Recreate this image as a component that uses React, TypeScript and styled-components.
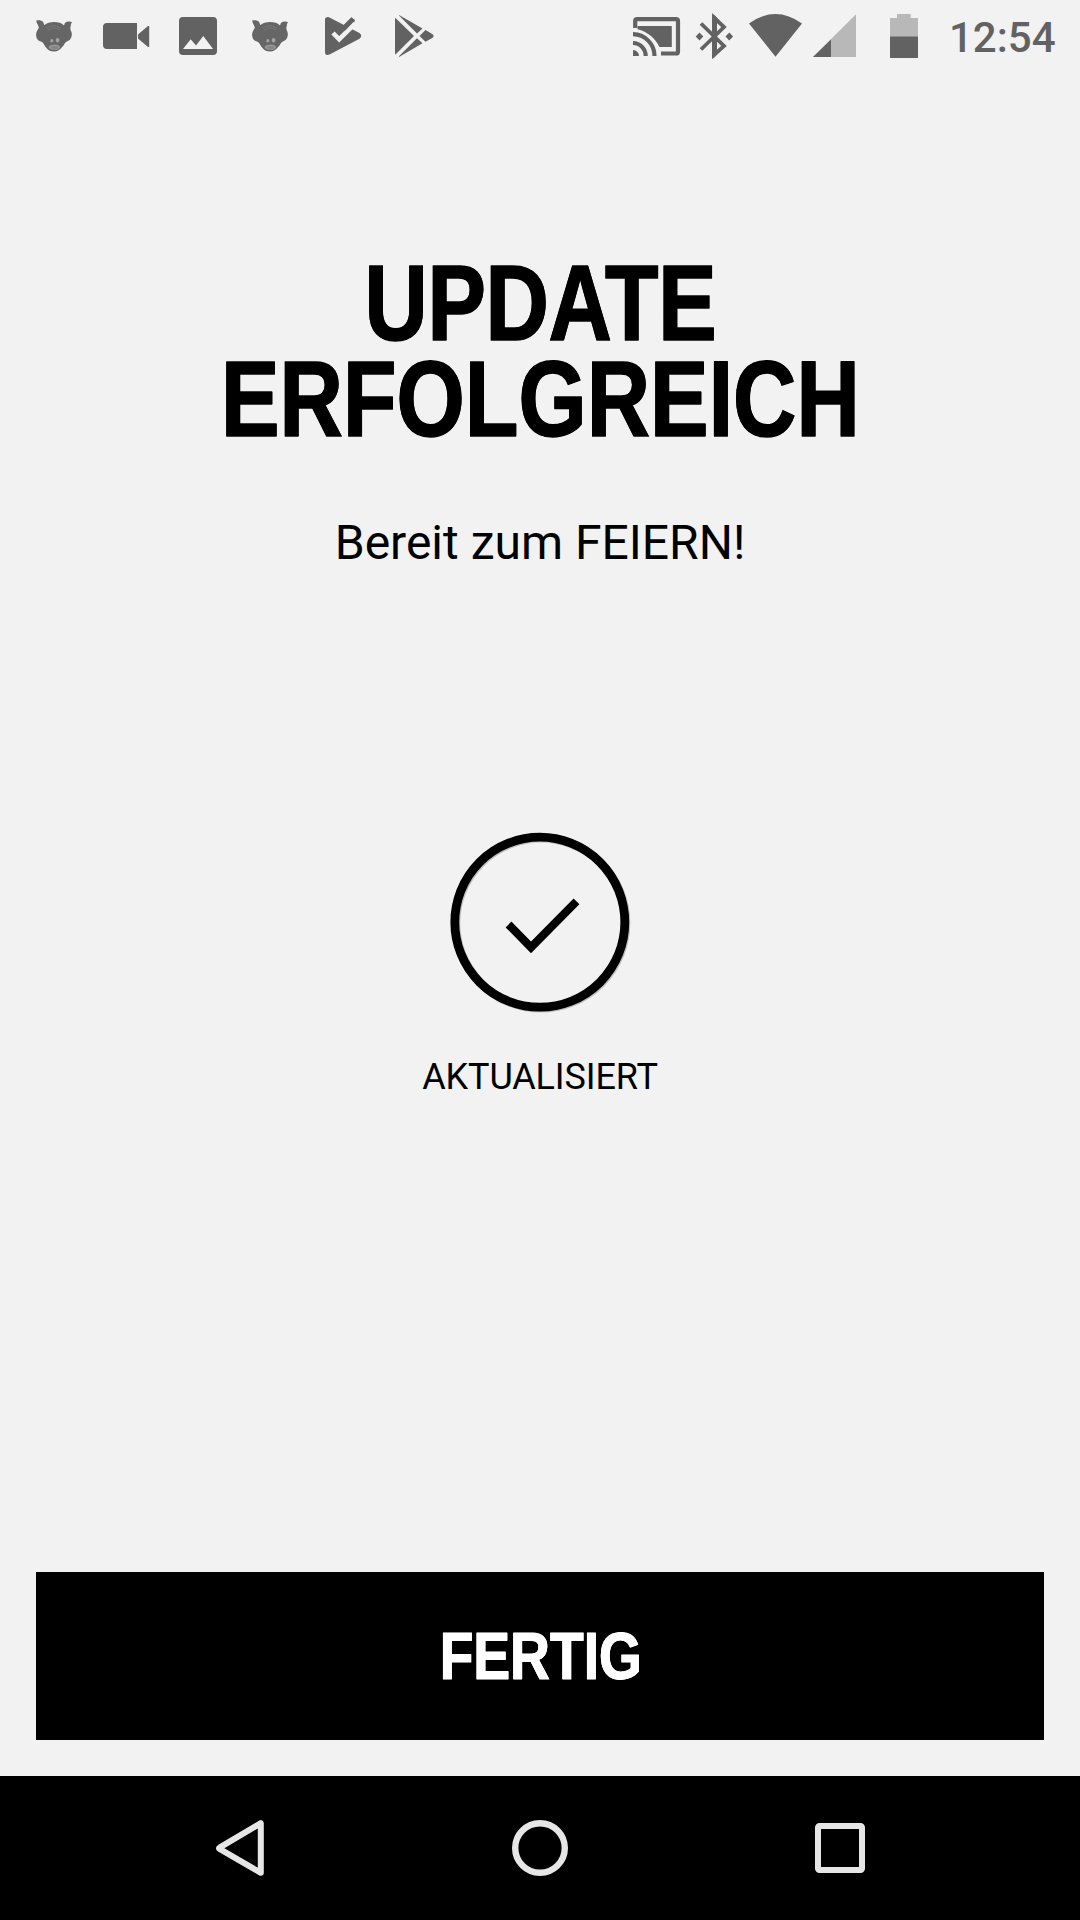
import React from 'react';
import styled, { createGlobalStyle } from 'styled-components';

const BG = '#f2f2f2';
const GREY = '#626262';
const LIGHT = '#b8b8b8';

const GlobalStyle = createGlobalStyle`
  * { box-sizing: border-box; }
  body { margin: 0; background: ${BG}; }
`;

const Screen = styled.main`
  width: 1080px;
  height: 1920px;
  display: flex;
  flex-direction: column;
  background: ${BG};
  color: #000;
  font-family: Roboto, 'Liberation Sans', sans-serif;
  overflow: hidden;
`;

const StatusBar = styled.header`
  display: flex;
  justify-content: space-between;
  height: 72px;
  padding: 0 24px 0 18px;
  color: ${GREY};
`;

const IconGroup = styled.div`
  display: flex;
  align-items: center;
`;

const Icon = styled.svg`
  display: block;
  flex: none;
`;

const Clock = styled.time`
  width: 114px;
  padding: 3px 0 0 7px;
  font-size: 42px;
  font-weight: 500;
  line-height: 72px;
  white-space: nowrap;
`;

const Content = styled.section`
  flex: 1;
  display: flex;
  flex-direction: column;
  align-items: center;
  padding-top: 183px;
`;

const Title = styled.h1`
  display: flex;
  flex-direction: column;
  margin: 0;
  font-family: 'Liberation Sans', Arial, sans-serif;
  font-size: 107px;
  font-weight: 700;
  line-height: 96px;
  text-align: center;
  white-space: nowrap;
  transform: scaleX(0.818);
  -webkit-text-stroke: 1.5px #000;
  text-shadow: 0.7px 0 #000, -0.7px 0 #000;
`;

const TitleLine = styled.span<{ $tracking?: number }>`
  display: block;
  height: 96px;
  letter-spacing: ${({ $tracking = 0 }) => $tracking}px;
`;

const Subtitle = styled.p`
  margin: 68px 0 0;
  font-size: 48px;
  line-height: 56px;
`;

const Badge = styled.div`
  display: flex;
  margin-top: 259px;
`;

const Caption = styled.p`
  margin: 42px 0 0;
  font-size: 36px;
  line-height: 42px;
  letter-spacing: -0.12px;
`;

const Footer = styled.footer`
  padding: 0 36px 36px;
`;

const DoneButton = styled.button`
  display: flex;
  align-items: center;
  justify-content: center;
  width: 100%;
  height: 168px;
  padding: 0 0 0 1px;
  border: 0;
  background: #000;
  color: #fff;
  font-family: 'Liberation Sans', Arial, sans-serif;
  font-size: 67.5px;
  font-weight: 700;
  line-height: 80px;
`;

const ButtonLabel = styled.span`
  transform: scaleX(0.817);
  -webkit-text-stroke: 1px #fff;
  text-shadow: 0.5px 0 #fff, -0.5px 0 #fff;
`;

const NavBar = styled.nav`
  display: flex;
  align-items: center;
  justify-content: space-between;
  height: 144px;
  padding: 0 204px;
  background: #000;
  color: #e6e6e6;
`;

function PigIcon() {
  return (
    <Icon width="72" height="72" viewBox="0 0 72 72">
      <path
        d="M18.3 20.5C20 19.8 24 20.3 25.3 22.2C26 23.4 25.6 24.6 26.6 25C30 21.2 42 20.6 45.6 25.2C46.8 25 46 23.4 47.6 22.4C49 21.4 52 20.8 54 22.3C52.5 24 53.2 25.6 52.3 27.8C52 29.3 53.4 30.8 53.8 33.5C54.1 37.4 52 40.8 48.8 41.4C46.6 42.4 46.4 44.6 44.6 46.6C42 50.2 39.6 51.5 36 51.6C32.5 51.6 29.8 50 27.6 47C25.9 44.8 25.4 42.5 23.2 41.5C19.9 41 17.9 38 18.1 34.4C18.2 31.5 19.8 29.6 20.8 28C20.8 25.3 18.2 23.3 18.3 20.5Z"
        fill="#666"
      />
      <path d="M28.7 27.8Q35.6 23.5 43 28M29.7 30Q36 26 42 30" fill="none" stroke="#7c7c7c" strokeWidth=".8" />
      <ellipse cx="33.8" cy="40.7" rx="1.5" ry="1.8" fill="#a4a4a4" />
      <ellipse cx="39.6" cy="40.3" rx="1.8" ry="2.3" fill="#a4a4a4" />
      <ellipse cx="36.4" cy="47.3" rx="5.6" ry="2.8" fill="#969696" />
      <ellipse cx="36.4" cy="47.6" rx="3.6" ry="1.4" fill="#858585" />
    </Icon>
  );
}

function VideoIcon() {
  return (
    <Icon width="72" height="72" viewBox="0 0 72 72" fill={GREY}>
      <path d="M17 23H47V49H17Q13 49 13 45V27Q13 23 17 23ZM48 34.5L58 26H59.2V47H58L48 38.5Z" />
    </Icon>
  );
}

function ImageIcon() {
  return (
    <Icon width="72" height="72" viewBox="0 0 72 72">
      <rect x="17" y="17" width="38" height="38" rx="4" fill={GREY} />
      <path d="M21 49L28.7 39.2L34 45.4L41.3 36L51 49Z" fill={BG} />
    </Icon>
  );
}

function PlayCheckIcon() {
  return (
    <Icon width="72" height="72" viewBox="0 0 72 72">
      <path d="M19 19.5Q19 17 22 17Q23 17 24 17.7L38 25L45.5 17.5L48.9 20.2L45.7 29L53.5 33Q57 36 53.5 38.7L24 54.3Q19 56.3 19 52Z" fill={GREY} />
      <path d="M27 33L33.2 39.3L49 23.5" fill="none" stroke={BG} strokeWidth="4.6" />
      <path d="M37.7 25L45.4 17.3L49 20.2L38.5 31.2Z" fill={GREY} />
    </Icon>
  );
}

function PlayStoreIcon() {
  return (
    <Icon width="72" height="72" viewBox="0 0 72 72" fill={GREY}>
      <path d="M17.5 18L36 36L17.5 54.4Q17 54.4 17 53V19Q17 17.6 17.5 18Z" />
      <path d="M21 15L44.5 28.5L39 33.5L21 15.6ZM21 57L44.5 43.2L39 38.2L21 56.3Z" />
      <path d="M47.5 30L54.2 34Q57 36 54.2 38L47.5 41.8L41.5 36Z" />
    </Icon>
  );
}

function CastIcon() {
  return (
    <Icon width="60" height="72" viewBox="0 0 60 72" fill="none" stroke={GREY} strokeWidth="4.2">
      <path d="M9.2 28V21Q9.2 19.1 11.2 19.1H50Q52 19.1 52 21V51.4Q52 53.5 50 53.5H35" />
      <path d="M11.5 26H45.8V47H33.5C29.5 38.5 21.5 31.5 11.5 29.2Z" fill={GREY} stroke="none" />
      <path d="M7 34.1A21.8 21.8 0 0 1 28.5 56M7 43A12.9 12.9 0 0 1 19.7 56" />
      <path d="M7 50A6 6 0 0 1 13 56H7Z" fill={GREY} stroke="none" />
    </Icon>
  );
}

function BluetoothIcon() {
  return (
    <Icon width="58" height="72" viewBox="0 0 58 72">
      <path d="M15 23.5L38 46L28 55V17.5L38 27L15 49.5" fill="none" stroke={GREY} strokeWidth="3.8" />
      <path d="M26.2 15H28.4L31 18V54L28.4 57.6H26.2ZM13.5 32.5L17.3 36.5L13.5 40.5L9.7 36.5ZM43.3 32.5L47.1 36.5L43.3 40.5L39.5 36.5Z" fill={GREY} />
    </Icon>
  );
}

function WifiIcon() {
  return (
    <Icon width="63" height="72" viewBox="0 0 63 72" fill={GREY}>
      <path d="M5 23.5Q31.5 4.5 58 23.5L31.5 56.8Z" />
    </Icon>
  );
}

function SignalIcon() {
  return (
    <Icon width="59" height="72" viewBox="0 0 59 72">
      <path d="M6 57L49 14.3V57Z" fill={LIGHT} />
      <path d="M6 57L24 39.5V57Z" fill={GREY} />
    </Icon>
  );
}

function BatteryIcon() {
  return (
    <Icon width="76" height="72" viewBox="0 0 76 72">
      <path d="M24 18H31V14H44.7V18H52V37H24Z" fill={LIGHT} />
      <path d="M24 36.5H52V58H24Z" fill={GREY} />
    </Icon>
  );
}

export default function App() {
  return (
    <>
      <GlobalStyle />
      <Screen>
        <StatusBar>
          <IconGroup>
            <PigIcon />
            <VideoIcon />
            <ImageIcon />
            <PigIcon />
            <PlayCheckIcon />
            <PlayStoreIcon />
          </IconGroup>
          <IconGroup>
            <CastIcon />
            <BluetoothIcon />
            <WifiIcon />
            <SignalIcon />
            <BatteryIcon />
            <Clock>12:54</Clock>
          </IconGroup>
        </StatusBar>
        <Content>
          <Title>
            <TitleLine $tracking={-0.3}>UPDATE</TitleLine>
            <TitleLine $tracking={0.2}>ERFOLGREICH</TitleLine>
          </Title>
          <Subtitle>Bereit zum FEIERN!</Subtitle>
          <Badge>
            <Icon width="184" height="184" viewBox="0 0 184 184" fill="none">
              <circle cx="92.9" cy="93.2" r="85" stroke="#bdbdbd" strokeWidth="8.8" />
              <circle cx="91.8" cy="92.2" r="85" stroke="#000" strokeWidth="8.8" />
              <path d="M60.5 94.5L83 117.3L128.5 71.3" stroke="#000" strokeWidth="8.2" />
            </Icon>
          </Badge>
          <Caption>AKTUALISIERT</Caption>
        </Content>
        <Footer>
          <DoneButton>
            <ButtonLabel>FERTIG</ButtonLabel>
          </DoneButton>
        </Footer>
        <NavBar>
          <Icon width="72" height="72" viewBox="0 0 72 72" fill="none" stroke="currentColor">
            <path d="M15.5 35.6L56.8 11.2V60.8L15.5 36.9Q14.3 36.2 15.5 35.6Z" strokeWidth="6" strokeLinejoin="round" />
          </Icon>
          <Icon width="72" height="72" viewBox="0 0 72 72" fill="none" stroke="currentColor">
            <circle cx="36" cy="36" r="24.8" strokeWidth="6.4" />
          </Icon>
          <Icon width="72" height="72" viewBox="0 0 72 72" fill="none" stroke="currentColor">
            <rect x="14" y="14" width="44" height="44" rx="1.5" strokeWidth="6" />
          </Icon>
        </NavBar>
      </Screen>
    </>
  );
}
